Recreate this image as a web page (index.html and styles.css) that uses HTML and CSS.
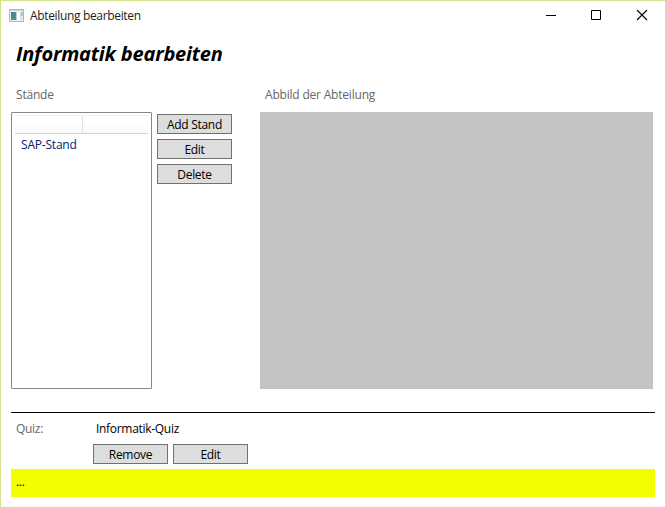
FILE: index.html
```html
<!DOCTYPE html>
<html lang="de">
<head>
<meta charset="utf-8">
<title>Abteilung bearbeiten</title>
<link rel="stylesheet" href="styles.css">
</head>
<body>
<div class="window">
  <header class="titlebar">
    <svg class="app-icon" width="16" height="14" viewBox="0 0 16 14" shape-rendering="crispEdges">
      <defs><linearGradient id="pane" x1="0" y1="0" x2="1" y2="1"><stop offset="0" stop-color="#4a79a8"/><stop offset="1" stop-color="#4f9d7c"/></linearGradient></defs>
      <rect x=".5" y=".5" width="14" height="12" fill="#eceef0" stroke="#b4b8bc"/>
      <rect x="1" y="1" width="13" height="1" fill="#d0d4d8"/>
      <rect x="2" y="3" width="5" height="8" fill="url(#pane)"/>
      <rect x="7" y="3" width="1" height="8" fill="#b9cfd6"/>
      <rect x="8" y="3" width="3" height="8" fill="#fff"/>
      <rect x="11" y="3" width="1" height="8" fill="#d5d9de"/>
      <rect x="12" y="3" width="2" height="4" fill="#a9cdb9"/>
      <rect x="12" y="7" width="2" height="4" fill="#e1e5e9"/>
    </svg>
    <span class="caption">Abteilung bearbeiten</span>
    <div class="controls">
      <svg width="46" height="28" viewBox="0 0 46 28"><path d="M18 14.5h10" stroke="#000"/></svg>
      <svg width="45" height="28" viewBox="0 0 45 28"><path d="M17.5 9.5h9v9h-9z" fill="none" stroke="#000"/></svg>
      <svg width="46" height="28" viewBox="0 0 46 28"><path d="M18 9l10 10M28 9l-10 10" stroke="#000" stroke-width="1.1"/></svg>
    </div>
  </header>
  <main class="content">
    <h1><span>Informatik bearbeiten</span></h1>
    <div class="columns">
      <section class="stands">
        <div class="label">Stände</div>
        <div class="stand-row">
          <div class="list">
            <div class="list-head"><i></i><i></i></div>
            <div class="item">SAP-Stand</div>
          </div>
          <div class="actions">
            <button>Add Stand</button>
            <button>Edit</button>
            <button>Delete</button>
          </div>
        </div>
      </section>
      <section class="image">
        <div class="label">Abbild der Abteilung</div>
        <div class="preview"></div>
      </section>
    </div>
    <section class="quiz">
      <div class="quiz-row"><span class="quiz-label">Quiz:</span><span class="quiz-name">Informatik-Quiz</span></div>
      <div class="quiz-actions">
        <button>Remove</button>
        <button>Edit</button>
      </div>
    </section>
    <footer class="status">...</footer>
  </main>
</div>
</body>
</html>
```
FILE: styles.css
```css
* { box-sizing: border-box; }
body { margin: 0; font: 12px/16px "Open Sans", "Noto Sans", sans-serif; color: #000; background: #fff; letter-spacing: -0.3px; }
span { white-space: nowrap; }
.window { width: 666px; height: 508px; border: 1px solid #d4e28a; overflow: hidden; }
.titlebar { display: flex; height: 28px; }
.app-icon { margin: 8px 0 0 8px; }
.caption { margin: 7px 0 0 5px; color: #222; letter-spacing: -0.34px; }
.controls { display: flex; margin-left: auto; }
.content { padding: 0 10px; }
h1 { margin: 0; padding: 11px 5px 0; height: 55px; font-size: 20px; line-height: 28px; font-style: italic; font-weight: 700; letter-spacing: -0.18px; }
.columns { display: flex; height: 328px; }
.stands { width: 249px; }
.label { height: 28px; padding: 3px 5px 0; color: #666; letter-spacing: -0.2px; }
.stand-row { display: flex; gap: 5px; }
.list { width: 141px; height: 277px; border: 1px solid #828790; border-radius: 1px; padding: 2px 3px; }
.list-head { display: flex; height: 19px; border-top: 1px solid #f0f1f2; border-bottom: 1px solid #d5d5d5; background: linear-gradient(#fff 40%, #f7f8f9); }
.list-head i { width: 68px; border-right: 1px solid #e0e2e5; }
.list-head i:last-child { width: auto; border: 0; }
.item { padding: 3px 6px; color: #042271; letter-spacing: -0.2px; }
.actions { display: flex; flex-direction: column; gap: 5px; padding-top: 2px; }
button { width: 75px; height: 20px; padding: 1px 0 0; border: 1px solid #707070; background: #ddd; color: #000; font: inherit; line-height: 16px; letter-spacing: inherit; text-align: center; }
.image { width: 393px; }
.preview { height: 277px; background: #c3c3c3; }
.quiz { width: 644px; height: 57px; border-top: 1px solid #000; }
.quiz-row { display: flex; height: 31px; padding: 8px 5px 0; }
.quiz-label { width: 80px; color: #666; }
.quiz-actions { display: flex; gap: 5px; padding-left: 82px; }
.status { width: 644px; height: 28px; padding: 5px; background: #f3ff00; }
```
